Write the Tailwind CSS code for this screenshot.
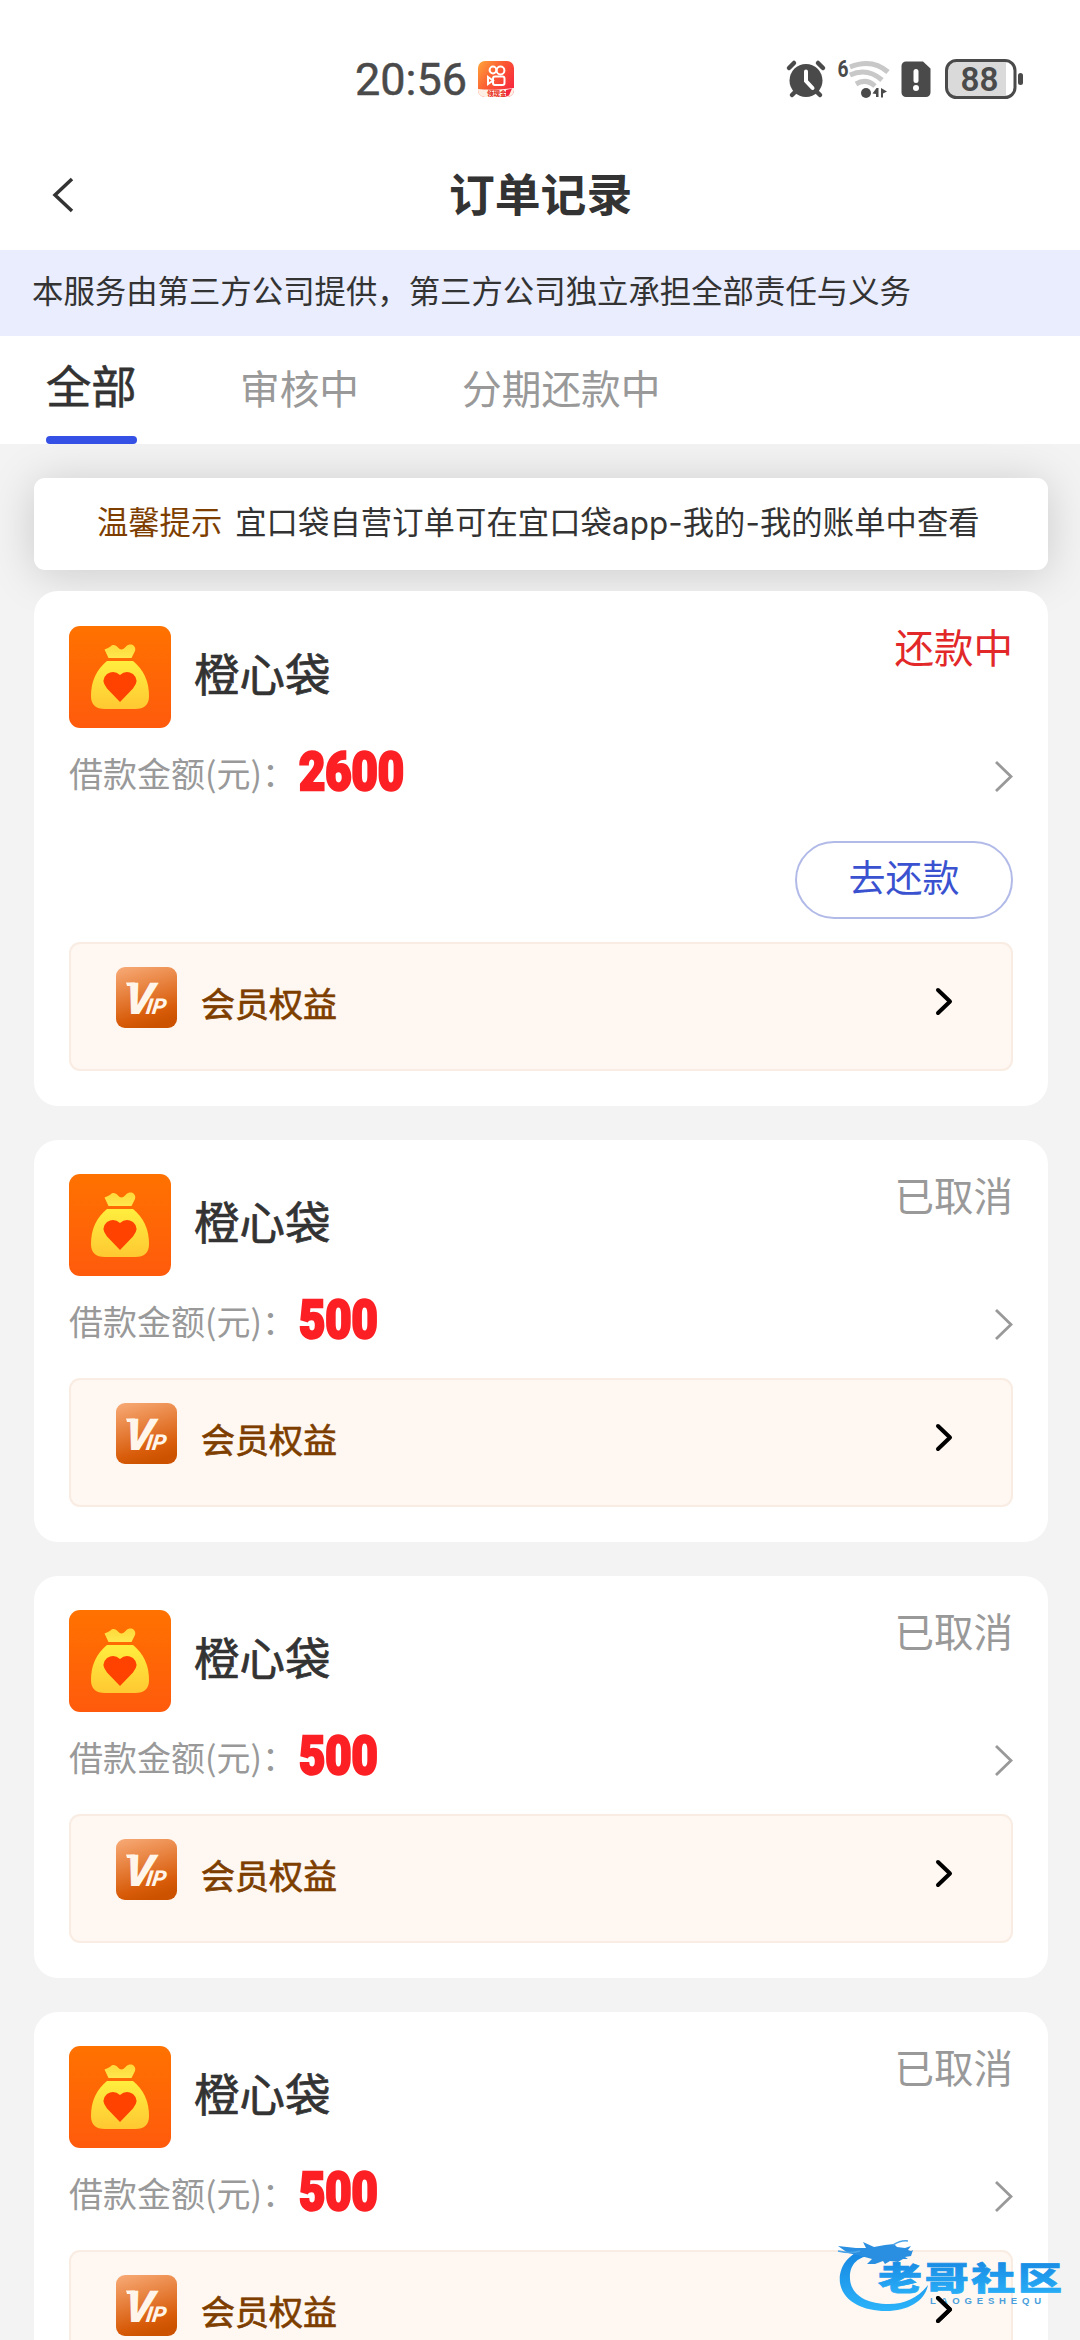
<!doctype html>
<html lang="zh-CN">
  <head>
    <meta charset="UTF-8" />
    <meta name="viewport" content="width=device-width, initial-scale=1.0" />
    <title>订单记录</title>
    <script src="https://cdn.jsdelivr.net/npm/@tailwindcss/browser@4"></script>
  </head>

  <body
    class="h-[2340px] w-[1080px] overflow-hidden bg-[#f3f3f3] font-['Noto_Sans_CJK_SC',sans-serif] text-[#333]"
  >
    <div class="relative h-[2340px] overflow-hidden">
      <!-- Status bar -->
      <div class="flex h-[140px] items-start bg-white pt-[57px]">
        <div
          class="ml-[355px] mt-[-1px] w-[111px] whitespace-nowrap font-[Roboto,sans-serif] text-[45px] leading-[48px] text-[#4a4a4a] [-webkit-text-stroke:0.5px_#4a4a4a]"
        >
          20:56
        </div>
        <svg class="ml-[12px] mt-[4px] h-[36px] w-[36px]" viewBox="0 0 36 36">
          <defs>
            <linearGradient id="ks" x1="0" y1="0" x2="1" y2="0.7">
              <stop offset="0" stop-color="#ffa63a" />
              <stop offset="0.5" stop-color="#fb5a32" />
              <stop offset="1" stop-color="#f7283e" />
            </linearGradient>
          </defs>
          <rect width="36" height="36" rx="7" fill="url(#ks)" />
          <g fill="none" stroke="#fff" stroke-width="2">
            <circle cx="15" cy="9" r="3.4" />
            <circle cx="22.5" cy="9.500" r="3.9" />
            <rect x="15" y="15.500" width="11.500" height="8.500" rx="2" />
            <path d="M10 16l5 3.500-5 3.500z" />
          </g>
          <path
            d="M0 28c9 1 19 1 36-1v2a7 7 0 0 1-7 7H7a7 7 0 0 1-7-7z"
            fill="#fff0e6"
          />
          <text x="9" y="34.500" font-size="6.500" font-weight="900" fill="#e83a2c">
            领现金
          </text>
          <path d="M28 29l6-1.500-3 7-3 1z" fill="#f7283e" />
        </svg>
        <svg class="ml-[271px] h-[44px] w-[242px]" viewBox="785 57 242 44">
          <!-- alarm clock -->
          <g stroke="#4a4a4a" stroke-width="4.500" stroke-linecap="round">
            <path d="M789 68l5-5M823 68l-5-5M796 91l-4 4M816 91l4 4" />
          </g>
          <circle cx="806" cy="80.500" r="16.500" fill="#4a4a4a" />
          <path
            d="M806 71.500v9.500l6.500 7"
            fill="none"
            stroke="#fff"
            stroke-width="4"
            stroke-linecap="round"
          />
          <!-- wifi -->
          <text
            x="837.500"
            y="76.500"
            font-family="Roboto"
            font-size="23"
            font-weight="700"
            textLength="11"
            lengthAdjust="spacingAndGlyphs"
            fill="#4a4a4a"
          >
            6
          </text>
          <g fill="none" stroke="#c8c8c8" stroke-width="5">
            <path d="M850 67q22-9 38 5" />
            <path d="M850 75q17-8 32 5" />
            <path d="M856 84q10-6 19 2" />
          </g>
          <circle cx="866" cy="93" r="5" fill="#4a4a4a" />
          <path
            d="M872.500 93.500l4-5.500h2v9h-2.500v-3zM881 88l6 3.500-4 2v4h-2z"
            fill="#4a4a4a"
          />
          <!-- sim warning -->
          <path
            d="M906 61.500h17l7.500 7v24a4.500 4.500 0 0 1-4.500 4.500h-20a4.500 4.500 0 0 1-4.500-4.500V66a4.500 4.500 0 0 1 4.500-4.500z"
            fill="#4a4a4a"
          />
          <path
            d="M916 71.500v9"
            stroke="#fff"
            stroke-width="5"
            stroke-linecap="round"
          />
          <circle cx="916" cy="88" r="3" fill="#fff" />
          <!-- battery -->
          <path
            d="M955 62h51v34h-51q-7 0-7-7V69q0-7 7-7z"
            fill="#dadada"
          />
          <rect
            x="946.500"
            y="60.500"
            width="68.500"
            height="37"
            rx="10"
            fill="none"
            stroke="#4a4a4a"
            stroke-width="3"
          />
          <rect x="1018" y="73" width="5" height="12" rx="2.500" fill="#4a4a4a" />
          <text
            x="960.500"
            y="91"
            font-family="Roboto"
            font-size="33"
            font-weight="600"
            textLength="38"
            lengthAdjust="spacingAndGlyphs"
            fill="#4a4a4a"
          >
            88
          </text>
        </svg>
      </div>

      <!-- Title bar -->
      <div class="flex h-[110px] items-center bg-white">
        <svg
          class="ml-[50px] h-[40px] w-[24px]"
          viewBox="0 0 24 40"
          fill="none"
          stroke="#333"
          stroke-width="3.500"
        >
          <path d="M22 4L5 20l17 16" />
        </svg>
        <h1
          class="ml-[375px] pb-[7px] text-[45.800px] font-bold leading-[60px] whitespace-nowrap"
        >
          订单记录
        </h1>
      </div>

      <div
        class="flex h-[86px] items-center bg-[#eaedfd] pb-[6px] pl-[32px] text-[31.400px] whitespace-nowrap"
      >
        本服务由第三方公司提供，第三方公司独立承担全部责任与义务
      </div>

      <!-- Tabs -->
      <div
        class="relative z-10 flex h-[108px] bg-white pl-[46px] text-[39.700px] leading-[101px] text-[#999] whitespace-nowrap"
      >
        <div
          class="flex w-[91px] flex-col justify-between text-[45.300px] leading-[97px] text-[#333] [-webkit-text-stroke:0.6px_#333]"
        >
          全部
          <div class="h-[8px] rounded-[4px] bg-[#3551e5]"></div>
        </div>
        <div class="ml-[103px]">审核中</div>
        <div class="ml-[103px]">分期还款中</div>
      </div>

      <div
        class="mr-[32px] ml-[34px] mt-[34px] flex h-[92px] items-center rounded-[11px] bg-white pb-[5px] pl-[63px] text-[31.300px] whitespace-nowrap shadow-[0_4px_46px_rgba(0,0,0,0.17)]"
      >
        <span class="text-[#7d3e00]">温馨提示</span>
        <span
          class="ml-[13px] pt-[3px] font-[Inter,'Noto_Sans_CJK_SC',sans-serif] tracking-[0.100px]"
          >宜口袋自营订单可在宜口袋app-我的-我的账单中查看</span
        >
      </div>

      <div
        id="orders"
        class="relative mr-[32px] ml-[34px] mt-[21px] flex flex-col gap-[34px]"
      >
        <!-- Order cards are added here -->
      </div>

      <!-- Community watermark -->
      <svg
        class="absolute top-[2232px] left-[832px] h-[84px] w-[236px]"
        viewBox="832 2232 236 84"
      >
        <defs>
          <linearGradient id="wm" x1="0" y1="0" x2="0" y2="1">
            <stop offset="0" stop-color="#1583df" />
            <stop offset="1" stop-color="#2bb3fa" />
          </linearGradient>
        </defs>
        <path
          d="M872 2247C848 2251 838 2268 840 2283C843 2301 862 2311 886 2311C908 2311 925 2301 928 2285C918 2298 905 2304 889 2304C865 2304 851 2294 850 2279C849 2264 859 2254 877 2256Z"
          fill="url(#wm)"
        />
        <path
          d="M838 2246l18 2 10 0-3-6 11 5 11-2 9-1 3 3 8 1 6-2-3 4 3 1 2-1-2 6-6 1 3 2-5 0-5 3-8-1-5 3-2-3-8 3-8 0 5-5-11-3-13-3z"
          fill="#2a8fe0"
        />
        <path
          d="M838 2251q13 3 22 0M893 2245q8-5 15-4"
          fill="none"
          stroke="#4ba3e8"
          stroke-width="1.500"
        />
        <text
          transform="translate(878 2290) scale(1 0.720)"
          font-family="Noto Sans CJK SC"
          font-size="44"
          font-weight="900"
          textLength="184"
          stroke="url(#wm)"
          stroke-width="1"
          fill="url(#wm)"
        >
          老哥社区
        </text>
        <text
          x="930"
          y="2303.500"
          font-family="Liberation Sans"
          font-size="9.500"
          font-weight="700"
          textLength="111"
          fill="#4a9fdc"
        >
          LAOGESHEQU
        </text>
      </svg>
      <!-- The last card's arrow stays above the watermark -->
      <svg
        class="absolute top-[2294px] left-[934px] h-[32px] w-[20px]"
        viewBox="0 0 20 32"
        fill="none"
        stroke="#000"
        stroke-width="4"
        stroke-linecap="round"
        stroke-linejoin="round"
      >
        <path d="M4 4l12 11.500L4 27" />
      </svg>
    </div>

    <svg class="absolute h-0 w-0">
      <defs>
        <linearGradient id="bagBg" x1="0" y1="0" x2="0" y2="1">
          <stop offset="0" stop-color="#ff7200" />
          <stop offset="1" stop-color="#ff5a0c" />
        </linearGradient>
        <linearGradient id="bagNeck" x1="0" y1="0" x2="0" y2="1">
          <stop offset="0" stop-color="#ffd83a" />
          <stop offset="1" stop-color="#ffe84e" />
        </linearGradient>
        <linearGradient id="bagBody" x1="0" y1="0" x2="0" y2="1">
          <stop offset="0" stop-color="#ffee3e" />
          <stop offset="1" stop-color="#ffc832" />
        </linearGradient>
        <linearGradient id="vipBg" x1="0.2" y1="0" x2="0.5" y2="1">
          <stop offset="0" stop-color="#f6a671" />
          <stop offset="0.8" stop-color="#d85c0a" />
          <stop offset="1" stop-color="#cc5200" />
        </linearGradient>
      </defs>
    </svg>

    <script>
      const orders = [
        { name: '橙心袋', amount: 2600, status: '还款中', active: true },
        { name: '橙心袋', amount: 500, status: '已取消' },
        { name: '橙心袋', amount: 500, status: '已取消' },
        { name: '橙心袋', amount: 500, status: '已取消' },
      ];

      const bagIcon = `
        <svg class="h-[102px] w-[102px]" viewBox="0 0 102 102">
          <rect width="102" height="102" rx="11" fill="url(#bagBg)" />
          <path d="M39.500 32L35.500 23.500C38 22 39 22.500 41.500 20.500C44 18 47 19 49 21.500C51.500 24.500 54 24 57 20.500C59.500 18 63 18 65 20C67 22 66.500 25 65 27L62.500 32Z" fill="url(#bagNeck)" />
          <path d="M38 35H64Q80 48 80 70Q80 83 66 83H36Q22 83 22 70Q22 48 38 35Z" fill="url(#bagBody)" />
          <path d="M51 76L38 62.500Q31 54 38 48Q45 43.500 51 49Q57 43.500 64 48Q71 54 64 62.500Z" fill="#ff4200" />
        </svg>`;

      const vipIcon = `
        <svg class="h-[61px] w-[61px]" viewBox="0 0 61 61">
          <rect width="61" height="61" rx="9" fill="url(#vipBg)" />
          <text transform="translate(7 47) skewX(-8)" fill="#fff5ea" font-family="Roboto" font-weight="900" font-style="italic" font-size="44">V<tspan dx="-6" font-size="22" font-weight="800">IP</tspan></text>
          <path d="M10 15.500h9v3.500h-8z" fill="#fff5ea" />
        </svg>`;

      // Builds one order card
      function renderOrder(order) {
        return `
          <div class="rounded-[24px] bg-white px-[35px] pb-[35px] ${order.active ? 'pt-[35px]' : 'pt-[34px]'}">
            <div class="flex h-[102px] whitespace-nowrap">
              ${bagIcon}
              <div class="ml-[23px] text-[45.500px] leading-[92px] [-webkit-text-stroke:0.7px_#333]">${order.name}</div>
              <div class="ml-auto text-[39.500px] leading-[39px] ${order.active ? 'text-[#e22828]' : 'text-[#999]'}">${order.status}</div>
            </div>
            <div class="mt-[21px] flex h-[54px] items-center whitespace-nowrap">
              <div class="w-[230px] pb-[6px] text-[34px] leading-[50px] text-[#999]">借款金额(元)：</div>
              <div class="origin-left scale-x-[0.84] pb-[8px] font-[Roboto,sans-serif] text-[54px] font-black leading-[54px] text-[#fc2025] [-webkit-text-stroke:2.500px_#fc2025]">${order.amount}</div>
              <svg class="ml-auto h-[34px] w-[19px]" viewBox="0 0 19 34" fill="none" stroke="#999" stroke-width="2.800">
                <path d="M2 3l15 14.500L2 32" />
              </svg>
            </div>
            ${
              order.active
                ? `<div class="mt-[38px] mb-[23px] ml-auto h-[78px] w-[218px] rounded-full border-2 border-[#b2bae8] text-center text-[37px] leading-[67px] text-[#3a52d0]">去还款</div>`
                : '<div class="h-[27px]"></div>'
            }
            <div class="flex h-[129px] items-start rounded-[11px] border-2 border-[#f9ece3] bg-[#fff7f1] pt-[23px] pr-[57px] pl-[45px]">
              ${vipIcon}
              <div class="ml-[24px] text-[34px] leading-[72px] text-[#7d3e00] [-webkit-text-stroke:0.7px_#7d3e00]">会员权益</div>
              <svg class="mt-[19px] ml-auto h-[32px] w-[20px]" viewBox="0 0 20 32" fill="none" stroke="#000" stroke-width="4" stroke-linecap="round" stroke-linejoin="round">
                <path d="M4 4l12 11.500L4 27" />
              </svg>
            </div>
          </div>`;
      }

      document.getElementById('orders').innerHTML = orders
        .map(renderOrder)
        .join('');
    </script>
  </body>
</html>
